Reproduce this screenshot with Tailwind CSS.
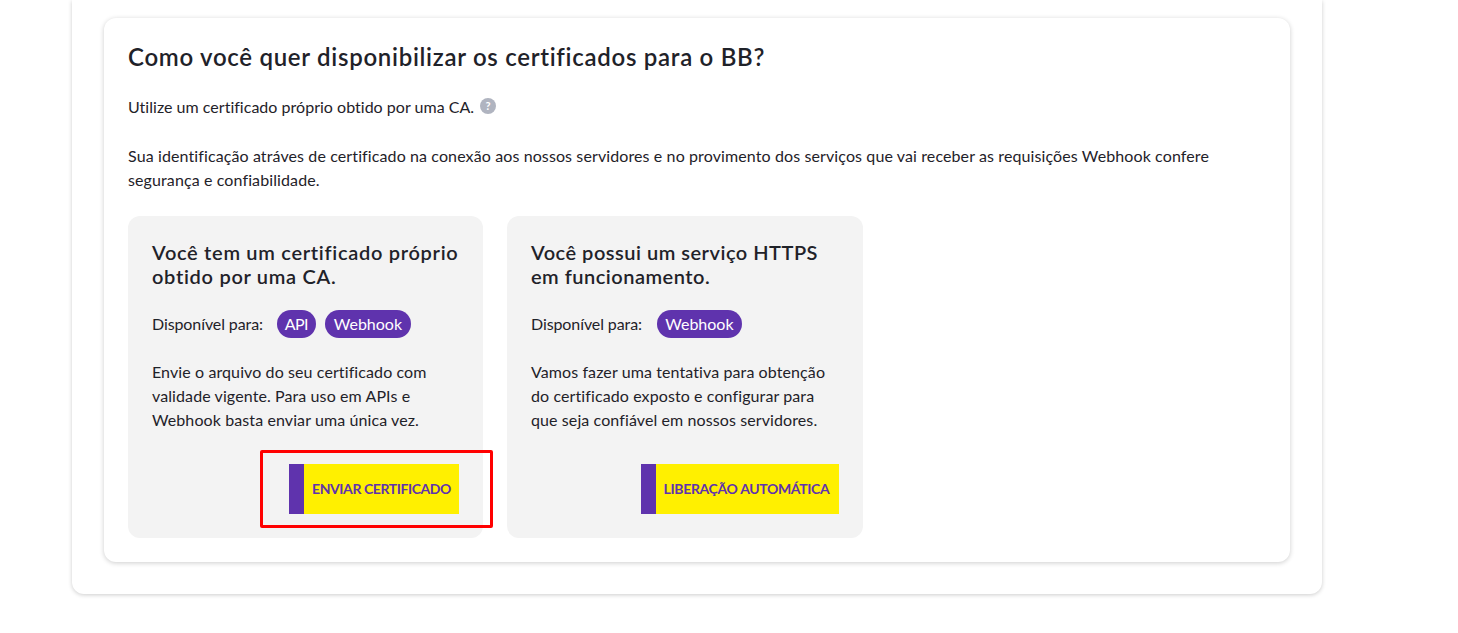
<!DOCTYPE html>
<html lang="pt-BR"><head><meta charset="utf-8">
<script src="https://cdn.jsdelivr.net/npm/@tailwindcss/browser@4"></script>
</head>
<body class="bg-white h-[633px] overflow-hidden font-['Lato','Noto_Sans',sans-serif] text-[#1f2229]">
<div class="relative w-[1250px] h-[594px] ml-[72px] pt-[18px] px-[32px] bg-white rounded-b-[12px] shadow-[0_1px_4px_rgba(0,0,0,0.2)]">
  <section class="w-[1186px] h-[544px] bg-white rounded-[12px] shadow-[0_1px_5px_rgba(0,0,0,0.2)] px-[24px] pt-[24px]">
    <h2 class="text-[24px] leading-[30px] font-semibold tracking-[0.71px]">Como você quer disponibilizar os certificados para o BB?</h2>
    <p class="mt-[23px] text-[16px] leading-[24px] flex items-start tracking-[0.02px]">Utilize um certificado próprio obtido por uma CA.
      <span class="ml-[6px] mt-[3px] w-[16px] h-[16px] rounded-full bg-[#b0b4c0] text-white text-[11px] leading-[16px] font-bold text-center">?</span></p>
    <p class="mt-[25px] text-[16px] leading-[24px] tracking-[0.11px]">Sua identificação atráves de certificado na conexão aos nossos servidores e no provimento dos serviços que vai receber as requisições Webhook confere segurança e confiabilidade.</p>
    <div class="mt-[24px] flex gap-[24px]">
      <article class="w-[355px] h-[322px] bg-[#f3f3f3] rounded-[12px] px-[24px] pt-[24px] flex flex-col">
        <h3 class="text-[20px] leading-[24px] font-semibold tracking-[0.7px]">Você tem um certificado próprio<br>obtido por uma CA.</h3>
        <div class="mt-[22px] h-[28px] flex items-center text-[16px]"><span class="tracking-[-0.1px]">Disponível para:</span>
          <span class="ml-[14px] h-[28px] w-[39px] text-center rounded-full bg-[#5f33ad] text-white leading-[28px] tracking-[-0.6px]">API</span>
          <span class="ml-[9px] h-[28px] w-[86px] text-center rounded-full bg-[#5f33ad] text-white leading-[28px]">Webhook</span></div>
        <p class="mt-[22px] text-[16px] leading-[24px] tracking-[0.1px]">Envie o arquivo do seu certificado com validade vigente. Para uso em APIs e Webhook basta enviar uma única vez.</p>
        <div class="mt-[32px] flex justify-end">
          <a class="h-[50px] w-[170px] pb-[2px] bg-[#fff000] border-l-[15px] border-[#5f33ad] flex items-center justify-center text-[14px] font-bold tracking-[-0.42px] text-[#5f33ad]">ENVIAR CERTIFICADO</a>
        </div>
      </article>
      <article class="w-[356px] h-[322px] bg-[#f3f3f3] rounded-[12px] px-[24px] pt-[24px] flex flex-col">
        <h3 class="text-[20px] leading-[24px] font-semibold tracking-[0.5px]">Você possui um serviço HTTPS<br>em funcionamento.</h3>
        <div class="mt-[22px] h-[28px] flex items-center text-[16px]"><span class="tracking-[-0.1px]">Disponível para:</span>
          <span class="ml-[15px] h-[28px] w-[85px] text-center rounded-full bg-[#5f33ad] text-white leading-[28px]">Webhook</span></div>
        <p class="mt-[22px] text-[16px] leading-[24px] tracking-[0.1px]">Vamos fazer uma tentativa para obtenção do certificado exposto e configurar para que seja confiável em nossos servidores.</p>
        <div class="mt-[32px] flex justify-end">
          <a class="h-[50px] w-[198px] pb-[2px] pr-[2px] bg-[#fff000] border-l-[15px] border-[#5f33ad] flex items-center justify-center text-[14px] font-bold tracking-[-0.35px] text-[#5f33ad]">LIBERAÇÃO AUTOMÁTICA</a>
        </div>
      </article>
    </div>
  </section>
  <div class="absolute left-[188px] top-[450px] w-[233px] h-[78px] border-[3px] border-[#ff0000] rounded-[2px]"></div>
</div>
</body></html>
